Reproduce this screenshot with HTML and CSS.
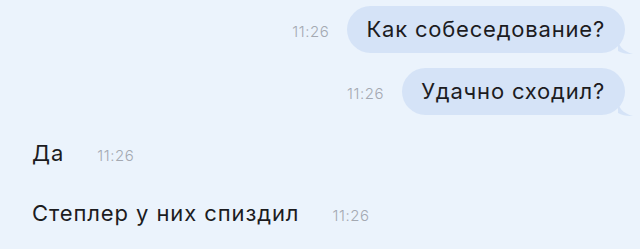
FILE: index.html
```html
<!DOCTYPE html>
<html lang="ru">
<head>
<meta charset="utf-8">
<link rel="stylesheet" href="styles.css">
</head>
<body>
<div class="chat">
  <div class="row out">
    <span class="time">11:26</span>
    <div class="bubble">Как собеседование?<svg class="tail" width="16" height="14" viewBox="0 0 16 14"><path d="M0 0 C2 7 7 11 15 13 C9 13.5 4 12 0 10 Z" fill="#d5e3f7"/></svg></div>
  </div>
  <div class="row out">
    <span class="time">11:26</span>
    <div class="bubble">Удачно сходил?<svg class="tail" width="16" height="14" viewBox="0 0 16 14"><path d="M0 0 C2 7 7 11 15 13 C9 13.5 4 12 0 10 Z" fill="#d5e3f7"/></svg></div>
  </div>
  <div class="row in">
    <div class="msg">Да</div>
    <span class="time">11:26</span>
  </div>
  <div class="row in">
    <div class="msg">Степлер у них спиздил</div>
    <span class="time">11:26</span>
  </div>
</div>
</body>
</html>
```
FILE: styles.css
```css
html, body {
  margin: 0;
  padding: 0;
  background: #ebf3fc;
  width: 640px;
  height: 249px;
  overflow: hidden;
}
.chat {
  display: flex;
  flex-direction: column;
  padding: 6px 15px 0 32px;
  font-family: Inter, "Noto Sans", sans-serif;
  color: #1c1c1f;
}
.row {
  display: flex;
  align-items: baseline;
}
.row.out {
  justify-content: flex-end;
  gap: 18px;
  margin-bottom: 15px;
}
.row.in {
  gap: 33px;
  height: 47px;
  line-height: 47px;
  margin-bottom: 13px;
}
.bubble {
  position: relative;
  background: #d5e3f7;
  border-radius: 24px;
  height: 47px;
  line-height: 47px;
  padding: 0 20px 0 19px;
  font-size: 22px;
  letter-spacing: 0.8px;
}
.msg {
  font-size: 22px;
  letter-spacing: 0.9px;
}
.tail {
  position: absolute;
  right: -9px;
  bottom: -2px;
}
.time {
  font-size: 15px;
  font-weight: 300;
  color: #a4a9b2;
  letter-spacing: 0.6px;
}
```
